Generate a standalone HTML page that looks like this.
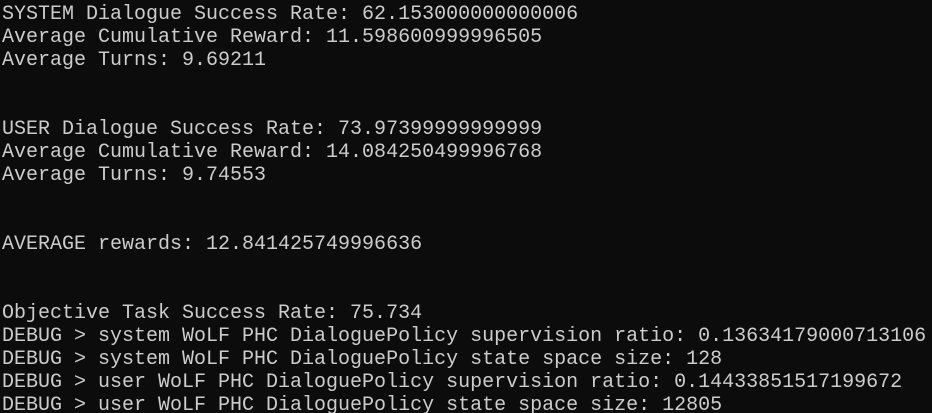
<!DOCTYPE html>
<html><head><meta charset="utf-8"><style>
html,body{margin:0;padding:0;background:#0c0c0c;width:932px;height:413px;overflow:hidden}
pre{margin:0;padding:3px 0 0 2px;font-family:"Liberation Mono",monospace;font-size:20px;line-height:23px;color:#cccccc;white-space:pre}
</style></head><body><pre>SYSTEM Dialogue Success Rate: 62.153000000000006
Average Cumulative Reward: 11.598600999996505
Average Turns: 9.69211


USER Dialogue Success Rate: 73.97399999999999
Average Cumulative Reward: 14.084250499996768
Average Turns: 9.74553


AVERAGE rewards: 12.841425749996636


Objective Task Success Rate: 75.734
DEBUG &gt; system WoLF PHC DialoguePolicy supervision ratio: 0.13634179000713106
DEBUG &gt; system WoLF PHC DialoguePolicy state space size: 128
DEBUG &gt; user WoLF PHC DialoguePolicy supervision ratio: 0.14433851517199672
DEBUG &gt; user WoLF PHC DialoguePolicy state space size: 12805</pre></body></html>
